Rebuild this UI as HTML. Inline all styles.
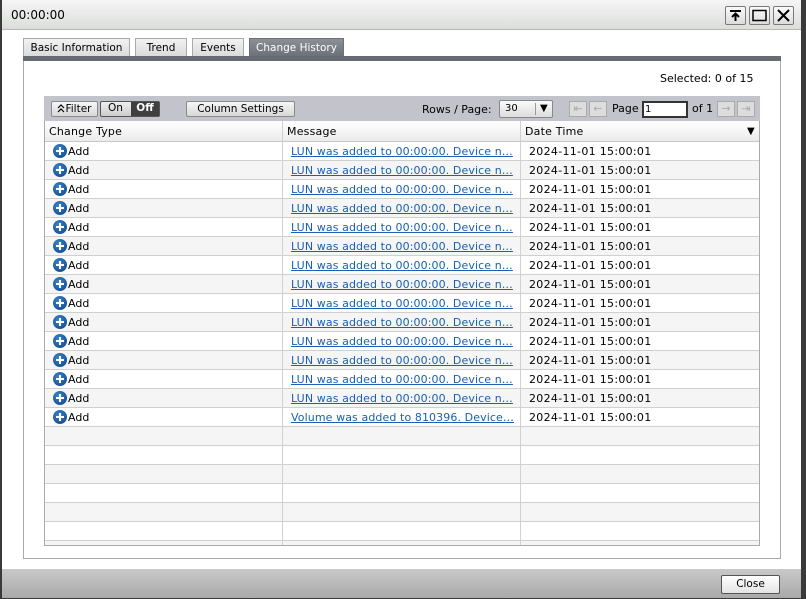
<!DOCTYPE html>
<html><head><style>
*{box-sizing:border-box;margin:0;padding:0}
body{width:806px;height:599px;background:#3a3a3a;font-family:"DejaVu Sans","Liberation Sans",sans-serif;font-size:11px;color:#000;position:relative;overflow:hidden}
.abs{position:absolute}
.win{left:2px;top:0;width:799px;height:598px;background:#fff}
.title{left:2px;top:0;width:799px;height:30px;background:linear-gradient(#f4f5f4,#dcdedc);border-bottom:1px solid #b8b8b8}
.title span{position:absolute;left:9px;top:8px;font-size:12px}
.tb{top:6px;width:21px;height:19px;border:1px solid #7a7a7a;border-radius:2px;background:linear-gradient(#fafafa,#dcdcdc)}
.tab{top:38px;height:19px;border:1px solid #aaa;border-bottom:none;background:linear-gradient(#f2f2f2,#dadada);text-align:center;line-height:19px;font-size:10.5px}
.grid div.row{position:absolute;left:0;width:715px;height:19px;border-bottom:1px solid #d0d0d0}
.c{position:absolute;top:0;height:19px;line-height:19px;white-space:nowrap;overflow:hidden;letter-spacing:0.2px}
.vl{position:absolute;top:0;width:1px;background:#d0d0d0}
a{color:#1a5fb4;text-decoration:underline}
.ic{display:inline-block;width:14px;height:14px;border-radius:50%;background:radial-gradient(circle at 40% 35%,#3d86cf,#0b3f84);vertical-align:-3px;position:relative;margin-right:1px}
.ic:before{content:"";position:absolute;left:3px;top:6px;width:8px;height:2px;background:#fff}
.ic:after{content:"";position:absolute;left:6px;top:3px;width:2px;height:8px;background:#fff}
.btn{border:1px solid #8a8a8a;border-radius:2px;background:linear-gradient(#f6f6f6,#d8d8d8);text-align:center;font-size:10.5px}
</style></head><body>
<div class="abs win"></div>
<div class="abs title"><span>00:00:00</span></div>
<div class="abs tb" style="left:725px"><svg width="19" height="17"><path d="M4 4h11M9.5 14V7M6 10l3.5-3.5L13 10" stroke="#000" stroke-width="2" fill="none"/></svg></div>
<div class="abs tb" style="left:749px"><svg width="19" height="17"><rect x="3" y="3.5" width="13" height="10" stroke="#000" stroke-width="1.5" fill="none"/></svg></div>
<div class="abs tb" style="left:773px"><svg width="19" height="17"><path d="M4 3l11 11M15 3L4 14" stroke="#000" stroke-width="2"/></svg></div>

<div class="abs tab" style="left:23px;width:107px">Basic Information</div>
<div class="abs tab" style="left:135px;width:52px">Trend</div>
<div class="abs tab" style="left:192px;width:52px">Events</div>
<div class="abs tab" style="left:249px;width:95px;background:linear-gradient(#8b9096,#6a7077);color:#fff;border-color:#6a7077">Change History</div>
<div class="abs" style="left:23px;top:56px;width:758px;height:5px;background:#666c72"></div>
<div class="abs" style="left:23px;top:61px;width:758px;height:498px;border:1px solid #aaa;border-top:none"></div>
<div class="abs" style="left:660px;top:72px;font-size:11px">Selected: 0 of 15</div>

<div class="abs" style="left:44px;top:96px;width:716px;height:25px;background:#c3c3cb"></div>
<div class="abs btn" style="left:51px;top:101px;width:47px;height:16px;line-height:14px"><svg width="8" height="9" style="vertical-align:-1px"><path d="M1 4l3-3 3 3M1 8l3-3 3 3" stroke="#000" stroke-width="1.2" fill="none"/></svg>Filter</div>
<div class="abs" style="left:100px;top:101px;width:60px;height:16px;border:1px solid #555;border-radius:2px;background:linear-gradient(#eee,#ccc)"></div>
<div class="abs" style="left:101px;top:101px;width:29px;height:15px;line-height:14px;text-align:center;font-size:10.5px">On</div>
<div class="abs" style="left:131px;top:102px;width:28px;height:14px;background:#3f3f3f;color:#fff;line-height:13px;text-align:center;font-size:10.5px;font-weight:bold">Off</div>
<div class="abs btn" style="left:186px;top:101px;width:109px;height:16px;line-height:14px">Column Settings</div>
<div class="abs" style="left:422px;top:103px">Rows / Page:</div>
<div class="abs" style="left:499px;top:100px;width:54px;height:18px;border:1px solid #888;border-radius:2px;background:linear-gradient(#fafafa,#ddd);font-size:10px;line-height:16px;padding-left:5px">30<span style="position:absolute;left:35px;top:2px;width:1px;height:12px;background:#999"></span><span style="position:absolute;left:40px;top:0">&#9660;</span></div>
<div class="abs" style="left:569px;top:101px;width:18px;height:16px;border:1px solid #aaa;background:#ddd;color:#aaa;text-align:center;line-height:14px">&#x21E4;</div>
<div class="abs" style="left:589px;top:101px;width:18px;height:16px;border:1px solid #aaa;background:#ddd;color:#aaa;text-align:center;line-height:14px">&#x2190;</div>
<div class="abs" style="left:612px;top:102px">Page</div>
<div class="abs" style="left:642px;top:101px;width:46px;height:17px;border:2px solid #333;background:#fff;font-size:10px;line-height:13px;padding-left:1px">1</div>
<div class="abs" style="left:692px;top:102px">of 1</div>
<div class="abs" style="left:717px;top:101px;width:18px;height:16px;border:1px solid #aaa;background:#ddd;color:#aaa;text-align:center;line-height:14px">&#x2192;</div>
<div class="abs" style="left:737px;top:101px;width:18px;height:16px;border:1px solid #aaa;background:#ddd;color:#aaa;text-align:center;line-height:14px">&#x21E5;</div>

<div class="abs grid" style="left:44px;top:121px;width:716px;height:425px;border:1px solid #aaa;border-top:none;overflow:hidden">
<div style="position:absolute;left:0;top:0;width:716px;height:21px;background:linear-gradient(#fff,#ececec);border-bottom:1px solid #c8c8c8"></div>
<div class="c" style="left:4px;top:1px">Change Type</div>
<div class="c" style="left:242px;top:1px">Message</div>
<div class="c" style="left:480px;top:1px">Date Time</div>
<div class="c" style="left:702px;top:1px;font-size:10px">&#9660;</div>
<div id="rows"></div>
<div class="vl" style="left:237px;height:425px"></div>
<div class="vl" style="left:475px;height:425px"></div>
</div>

<div class="abs" style="left:2px;top:569px;width:799px;height:29px;background:linear-gradient(#c8c9c8,#a8a9a8)"></div>
<div class="abs btn" style="left:721px;top:575px;width:59px;height:19px;line-height:17px;border-color:#555;background:linear-gradient(#fff,#e4e4e4)">Close</div>
<script>
var h='';
for(var i=0;i<22;i++){var t=21+i*19;var bg=i%2?'#f5f5f5':'#fff';
h+='<div class="row" style="top:'+t+'px;background:'+bg+'">';
if(i<15){var m=i<14?'LUN was added to 00:00:00. Device n…':'Volume was added to 810396. Device…';
h+='<div class="c" style="left:8px;letter-spacing:0"><span class="ic"></span>Add</div><div class="c" style="left:246px;width:224px;letter-spacing:0.1px"><a>'+m+'</a></div><div class="c" style="left:484px;letter-spacing:0.3px">2024-11-01 15:00:01</div>';}
h+='</div>';}
document.getElementById('rows').innerHTML=h;
</script>
</body></html>
